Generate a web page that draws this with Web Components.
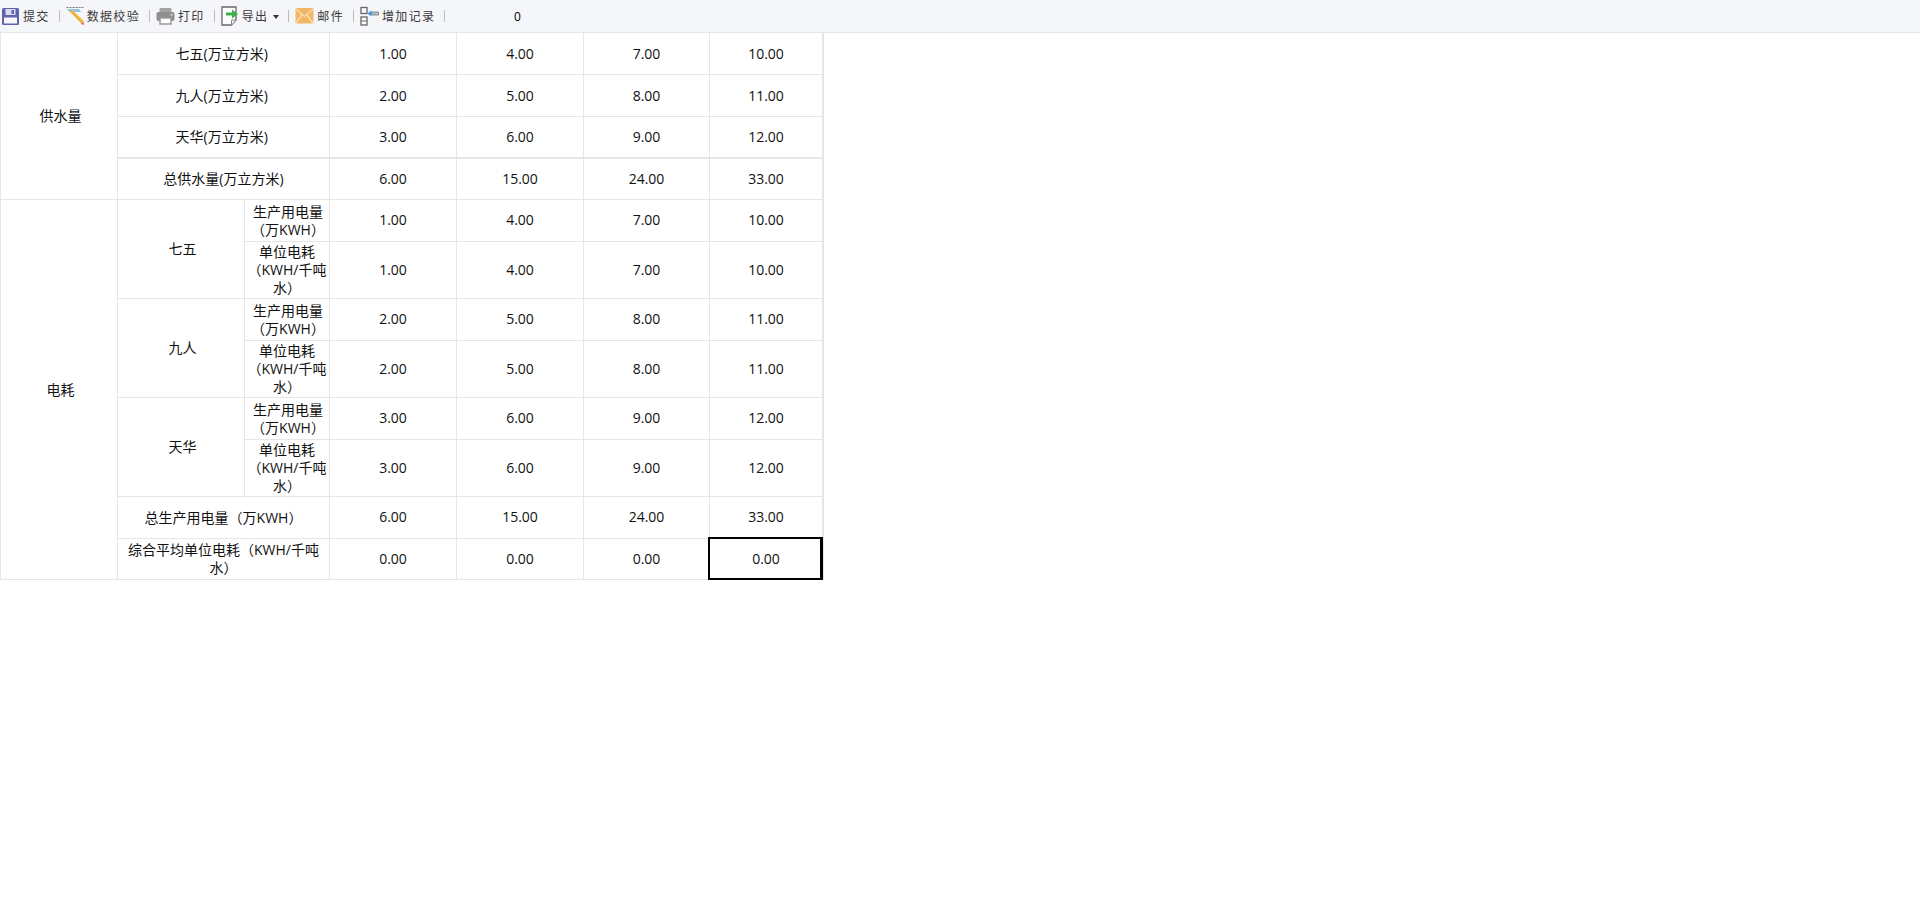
<!DOCTYPE html>
<html lang="zh"><head><meta charset="utf-8"><title>报表</title>
<style>
html,body{margin:0;padding:0;background:#fff;height:100%;overflow:hidden}
body{font-family:"Open Sans","Noto Sans CJK SC",sans-serif;color:#111}
</style></head><body>
<x-toolbar>
  <x-tool icon="save" w="19">提交</x-tool><x-sep></x-sep>
  <x-tool icon="check" w="18">数据校验</x-tool><x-sep></x-sep>
  <x-tool icon="print" w="19">打印</x-tool><x-sep></x-sep>
  <x-tool icon="export" w="18" caret>导出</x-tool><x-sep></x-sep>
  <x-tool icon="mail" w="19">邮件</x-tool><x-sep></x-sep>
  <x-tool icon="add" w="19">增加记录</x-tool><x-sep></x-sep>
  <x-counter>0</x-counter>
</x-toolbar>
<x-sheet></x-sheet>
<script>
const ICONS={
save:`<svg width="19" height="19" viewBox="0 0 19 19"><rect x="1" y="1" width="17" height="17" rx="1.5" fill="#5f62ad"/><rect x="4.500" y="2" width="10" height="6" fill="#dcdcee"/><rect x="10.500" y="3" width="2.500" height="4" fill="#5f62ad"/><rect x="3" y="10.500" width="13" height="6" fill="#f7f7fb"/></svg>`,
check:`<svg width="18" height="20" viewBox="0 0 18 20"><path d="M0.500 1.500h17" stroke="#777" stroke-width="1" stroke-dasharray="2 1"/><path d="M1 3h12l2 3H3.500z" fill="#8fc7ea"/><path d="M3.500 5.500l3-1.500 11 10.500-2.500 3z" fill="#f4c24f"/><path d="M5 5l10.500 10.500" stroke="#d99a2e" stroke-width="1"/><path d="M15 18l2.500-3 .5 4z" fill="#e5604d"/></svg>`,
print:`<svg width="19" height="20" viewBox="0 0 19 20"><rect x="3.500" y="2" width="12" height="5" rx="1" fill="#a3a3a3"/><rect x="0.500" y="6" width="18" height="9" rx="2" fill="#8e8e8e"/><rect x="4" y="12" width="11" height="6" fill="#fff" stroke="#9a9a9a" stroke-width="1.500"/><rect x="14.500" y="8" width="2" height="1.500" fill="#ddd"/></svg>`,
export:`<svg width="18" height="20" viewBox="0 0 18 20"><path d="M1 1h14v13l-4.500 5H1z" fill="#fff" stroke="#666" stroke-width="1.300"/><path d="M15 14h-4.500v5" fill="#eee" stroke="#888" stroke-width="1"/><path d="M5 6.500h6V3.500l6 4.500-6 4.500V9.500H5z" fill="#3fae4a"/></svg>`,
mail:`<svg width="19" height="18" viewBox="0 0 19 18"><rect x="0.500" y="1" width="18" height="15.500" rx="1" fill="#f1b767"/><path d="M1 2l8.500 7.500L18 2M1 16l6-8M18 16l-6-8" fill="none" stroke="#f9dcae" stroke-width="1.300"/></svg>`,
add:`<svg width="19" height="20" viewBox="0 0 19 20"><rect x="1" y="1.500" width="6" height="6" fill="#fff" stroke="#666" stroke-width="1.300"/><rect x="1" y="11" width="6" height="8" fill="#fff" stroke="#666" stroke-width="1.300"/><path d="M1 15h6" stroke="#666"/><path d="M12 6h6.500v3H12z" fill="#b4c4d0" stroke="#777" stroke-width=".8"/><path d="M7.500 7.500l4-3v6z" fill="#3b8fe0"/></svg>`
};
class Base extends HTMLElement{
  constructor(){super();this.attachShadow({mode:'open'});}
}
customElements.define('x-toolbar',class extends Base{
  connectedCallback(){this.shadowRoot.innerHTML=`<style>:host{display:flex;align-items:center;box-sizing:border-box;height:33px;padding-left:1px;background:#f5f6f9;border-bottom:1px solid #e6e6e8;font-family:"Noto Sans CJK SC",sans-serif;font-size:12px;color:#3a3a3a}</style><slot></slot>`;}
});
customElements.define('x-tool',class extends Base{
  connectedCallback(){
    const ic=this.getAttribute('icon');
    const caret=this.hasAttribute('caret');
    this.shadowRoot.innerHTML=`<style>:host{display:inline-flex;align-items:center;gap:3px;height:32px}
    .i{display:flex;width:${this.getAttribute('w')}px;justify-content:center}
    .t{letter-spacing:1.33px;white-space:nowrap;line-height:16px}
    .c{width:0;height:0;border:3px solid transparent;border-top:4px solid #333;border-bottom:0;margin-left:2px;margin-top:1px}</style>
    <span class="i">${ICONS[ic]}</span><span class="t"><slot></slot></span>${caret?'<span class="c"></span>':''}`;
  }
});
customElements.define('x-sep',class extends Base{
  connectedCallback(){this.shadowRoot.innerHTML=`<style>:host{display:block;width:1px;height:12px;background:#bbb;margin:0 6px 0 9px}</style>`;}
});
customElements.define('x-counter',class extends Base{
  connectedCallback(){this.shadowRoot.innerHTML=`<style>:host{display:block;width:132px;text-align:center;font-family:"Open Sans",sans-serif;font-size:12px;color:#000}</style><slot></slot>`;}
});
const u='(万立方米)\u00a0';
const P='生产用电量（万KWH）',D='单位电耗（KWH/千吨水）';
const rows=[
 [42,[['供水量',{r:4,f:1}],['七五'+u,{c:2}]],[1,4,7,10]],
 [42,[['九人'+u,{c:2}]],[2,5,8,11]],
 [42,[['天华'+u,{c:2}]],[3,6,9,12],'thick'],
 [41,[['总供水量(万立方米)',{c:2}]],[6,15,24,33]],
 [42,[['电耗',{r:9,f:1}],['七五',{r:2,k:'sh'}],[P,{k:'sh2'}]],[1,4,7,10],'up'],
 [57,[[D,{}]],[1,4,7,10]],
 [42,[['九人',{r:2,k:'sh'}],[P,{k:'sh2'}]],[2,5,8,11],'up'],
 [57,[[D,{}]],[2,5,8,11]],
 [42,[['天华',{r:2,k:'sh'}],[P,{k:'sh2'}]],[3,6,9,12],'up'],
 [57,[[D,{}]],[3,6,9,12]],
 [42,[['总生产用电量（万KWH）',{c:2}]],[6,15,24,33],'up'],
 [41,[['综合平均单位电耗（KWH/千吨水）',{c:2}]],[0,0,0,0],'last']
];
customElements.define('x-sheet',class extends Base{
  connectedCallback(){
    const cols=[118,127,85,127,127,126,114];
    let h=`<style>:host{display:block;font-size:14px;line-height:18px;color:#111}
    table{table-layout:fixed;border-collapse:separate;border-spacing:0;width:824px}
    td{box-sizing:border-box;padding:0;text-align:center;vertical-align:middle;border-right:1px solid #e6e6e6;border-bottom:1px solid #e6e6e6}
    td.f{border-left:1px solid #e6e6e6;padding-left:3px}
    td.sh{padding-left:3px}
    td.sh2{padding-left:2px}
    tr.up td.n{padding-bottom:1px}
    tr.thick td{border-bottom-width:2px}
    td.end{border-right-width:2px}
    td.sel{position:relative;border-right-width:2px}
    td.sel::after{content:"";position:absolute;left:-2px;top:-2px;right:-1px;bottom:-1px;border:2px solid #000;border-right-width:3px;box-sizing:border-box}
    </style><table><colgroup>${cols.map(w=>`<col style="width:${w}px">`).join('')}</colgroup>`;
    rows.forEach((r,i)=>{
      h+=`<tr class="${r[3]||''}" style="height:${r[0]}px">`;
      r[1].forEach(([t,o])=>{
        const c=[o.f?'f':'',o.k||''].join(' ').trim();
        h+=`<td${o.r?` rowspan="${o.r}"`:''}${c?` class="${c}"`:''}${o.c?` colspan="${o.c}"`:''}>${t}</td>`;
      });
      r[2].forEach((n,j)=>{
        const cls=j==3?(r[3]=='last'?'sel':'end'):'';
        h+=`<td class="n ${cls}">${n.toFixed(2)}</td>`;
      });
      h+='</tr>';
    });
    this.shadowRoot.innerHTML=h+'</table>';
  }
});
</script>
</body></html>
